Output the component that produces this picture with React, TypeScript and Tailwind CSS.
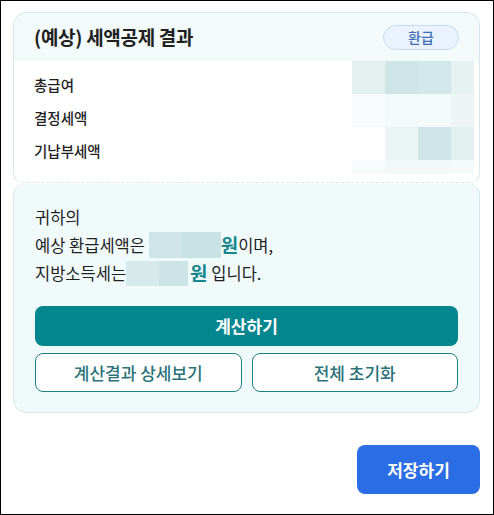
import React from 'react';

const font = { fontFamily: '"Noto Sans CJK KR", "Noto Sans", sans-serif' };

// blurred amount blocks, one row per line
const mosaic: string[][] = [
    ['#e4f0f0', '#cfe4e7', '#d2e7e9', '#e6f2f2'],
    ['#f8fbfb', '#f4f9f9', '#f4f9f9', '#ecf4f4'],
    ['#ffffff', '#eaf4f5', '#cfe4e7', '#e3f0f0'],
];

function Mosaic() {
    return (
        <div className="flex flex-col">
            {mosaic.map((row, i) => (
                <div key={i} className="flex h-[33px]">
                    {row.map((c, j) => (
                        <div key={j} className={j === 3 ? 'w-[23px] h-full' : 'w-[33px] h-full'} style={{ background: c }} />
                    ))}
                </div>
            ))}
            <div className="flex h-[14px]">
                <div className="w-[33px] bg-[#f7fbfb]" />
                <div className="w-[33px] bg-[#f3f9f9]" />
                <div className="w-[33px] bg-[#f2f9f9]" />
                <div className="w-[23px] bg-[#f4fafa]" />
            </div>
        </div>
    );
}

function App() {
    return (
        <div className="w-[494px] h-[515px] border border-black bg-white pt-[11px] pl-[12px] pr-[13px] text-[#1f1f1f]" style={font}>
            {/* result card */}
            <div className="w-[467px] rounded-t-[14px] rounded-b-[10px] border border-[#d6e8ea] [border-bottom-style:dashed] overflow-hidden">
                <div className="h-[48px] bg-[#f2fafa] flex items-center justify-between pl-[20px] pr-[20px]">
                    <h2 className="text-[19px] font-bold tracking-[-0.3px]">(예상) 세액공제 결과</h2>
                    <span className="w-[76px] h-[25px] rounded-full border border-[#c8daee] bg-[#eaf3fd] text-[#3f6fb3] text-[14px] font-medium flex items-center justify-center">환급</span>
                </div>
                <div className="flex justify-between pl-[20px] pr-[5px] h-[121px]">
                    <div className="flex flex-col pt-[7px] text-[14.5px] font-medium">
                        <div className="h-[33px] flex items-center">총급여</div>
                        <div className="h-[33px] flex items-center">결정세액</div>
                        <div className="h-[33px] flex items-center">기납부세액</div>
                    </div>
                    <Mosaic />
                </div>
            </div>

            {/* summary card */}
            <div className="w-[467px] mt-[1px] h-[229px] rounded-t-[10px] rounded-b-[14px] border border-t-0 border-[#d6e8ea] bg-[#f1fafa] pl-[21px] pr-[21px] pt-[19px]">
                <div className="text-[16.5px] leading-[28px]">
                    <p>귀하의</p>
                    <p className="flex items-center">
                        예상 환급세액은&nbsp;
                        <span className="inline-flex h-[26px]">
                            <span className="w-[33px] bg-[#cfe4e7]" />
                            <span className="w-[39px] bg-[#c9e2e5]" />
                        </span>
                        <span className="text-[19px] font-bold text-[#17878d]">원</span>이며,
                    </p>
                    <p className="flex items-center">
                        지방소득세는
                        <span className="inline-flex h-[25px]">
                            <span className="w-[33px] bg-[#d6e9eb]" />
                            <span className="w-[29px] bg-[#cde4e6]" />
                        </span>
                        <span className="text-[19px] font-bold text-[#17878d] ml-[2px]">원</span>&nbsp;입니다.
                    </p>
                </div>
                <button className="mt-[19px] w-[423px] h-[40px] rounded-[8px] bg-[#03868e] text-white text-[17px] font-bold">계산하기</button>
                <div className="mt-[7px] w-[423px] flex gap-[10px]">
                    <button className="flex-1 h-[39px] rounded-[8px] border border-[#1f7f86] bg-white text-[#2b7379] text-[17px] font-medium">계산결과 상세보기</button>
                    <button className="flex-1 h-[39px] rounded-[8px] border border-[#1f7f86] bg-white text-[#2b7379] text-[17px] font-medium">전체 초기화</button>
                </div>
            </div>

            <div className="flex justify-end mt-[32px]">
                <button className="w-[123px] h-[49px] rounded-[8px] bg-[#2a6de4] text-white text-[17px] font-semibold">저장하기</button>
            </div>
        </div>
    );
}

export default App;
